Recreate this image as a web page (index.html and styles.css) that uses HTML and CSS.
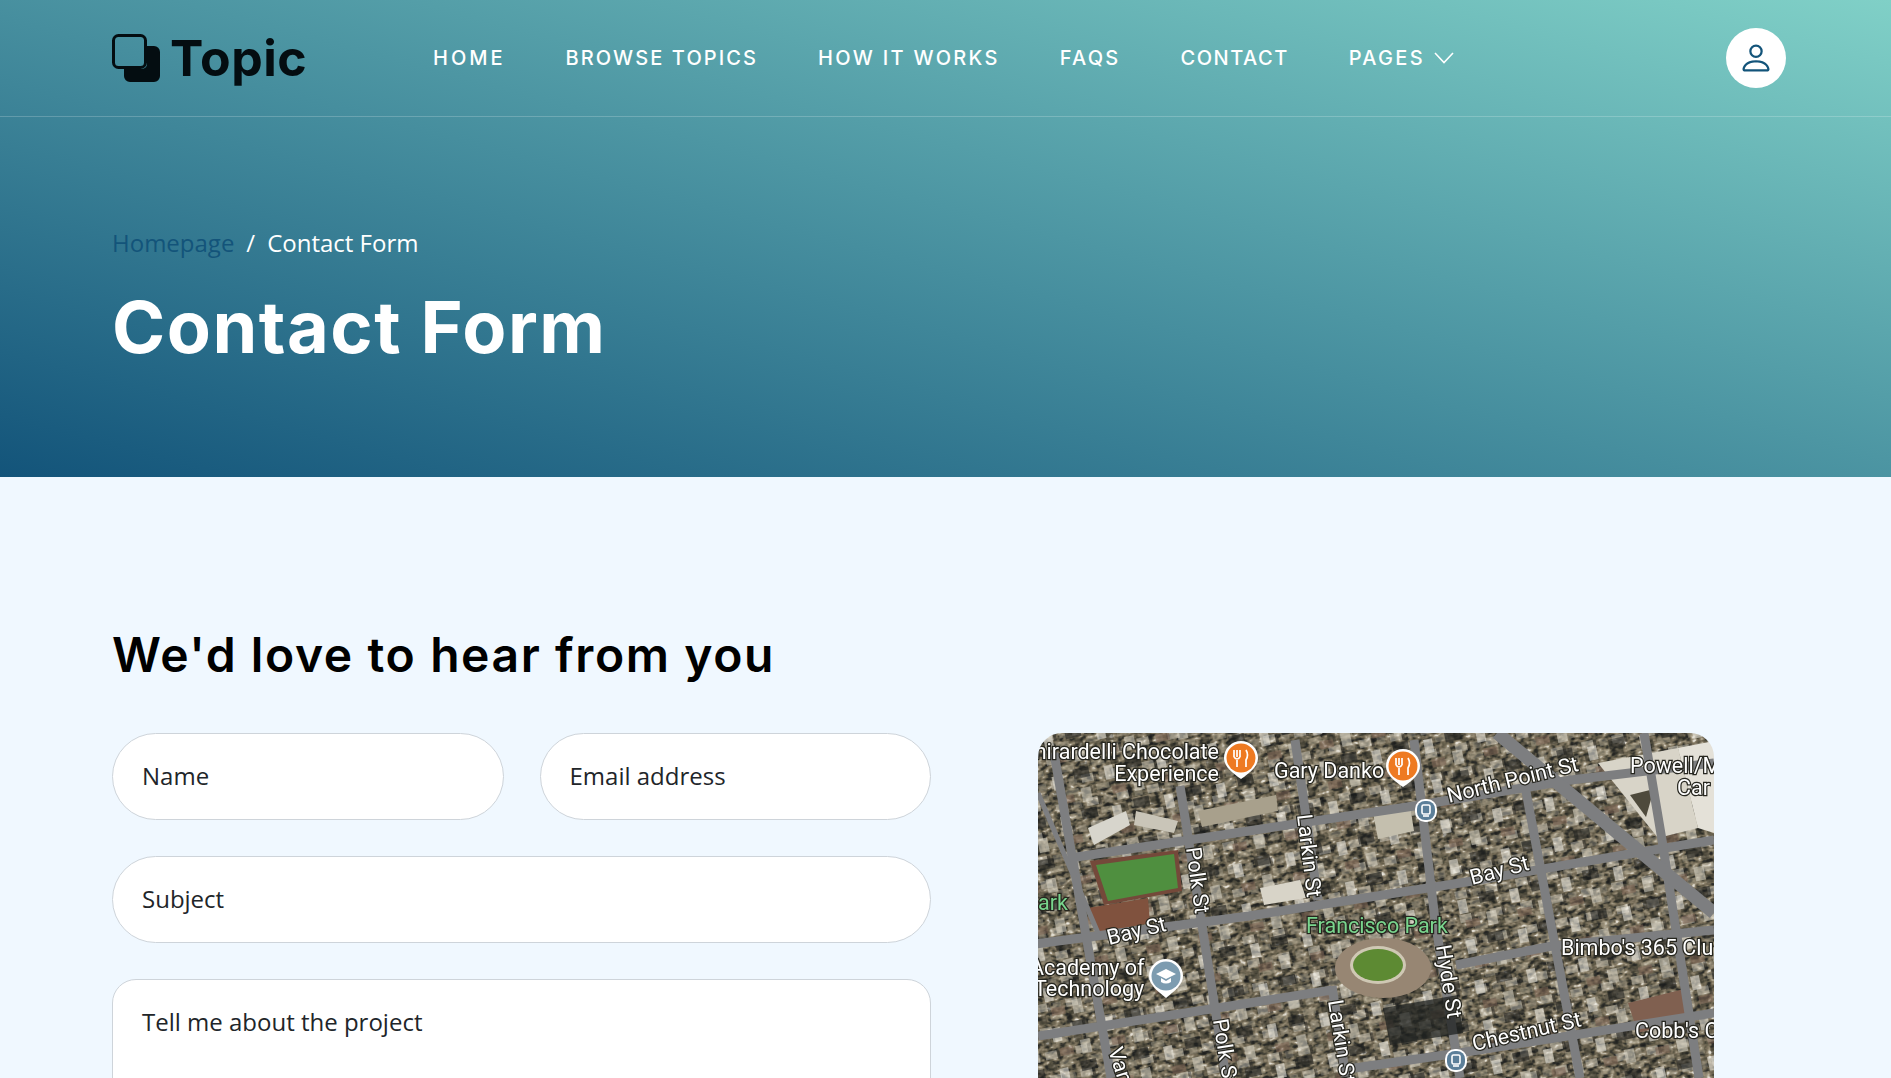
FILE: index.html
```html
<!DOCTYPE html>
<html lang="en">
<head>
  <meta charset="UTF-8">
  <title>Topic - Contact Form</title>
  <link rel="stylesheet" href="styles.css">
</head>
<body>

<!-- hero with navbar -->
<header class="hero">
  <div class="navbar">
    <a class="logo" href="#">
      <svg class="logo-icon" viewBox="0 0 48 48" width="48" height="48" fill="#040d11">
        <path d="M35 12h7a6 6 0 0 1 6 6v24a6 6 0 0 1-6 6H18a6 6 0 0 1-6-6v-7h18a5 5 0 0 0 5-5Z"/>
        <rect x="1.5" y="1.5" width="32" height="32" rx="5" fill="none" stroke="#040d11" stroke-width="3"/>
      </svg>
      <span>Topic</span>
    </a>
    <nav class="nav-links">
      <a href="#" class="loose">Home</a>
      <a href="#" class="tight">Browse Topics</a>
      <a href="#">How it works</a>
      <a href="#">FAQs</a>
      <a href="#" class="tighter">Contact</a>
      <a href="#" class="dropdown">Pages
        <svg viewBox="0 0 20 12" width="20" height="12"><polyline points="1,1 10,10.5 19,1" fill="none" stroke="#fff" stroke-width="1.6"/></svg>
      </a>
    </nav>
    <a class="user-btn" href="#">
      <svg viewBox="0 0 16 16" width="36" height="36" fill="#13547a"><path d="M8 8a3 3 0 1 0 0-6 3 3 0 0 0 0 6Zm2-3a2 2 0 1 1-4 0 2 2 0 0 1 4 0Zm4 8c0 1-1 1-1 1H3s-1 0-1-1 1-4 6-4 6 3 6 4Zm-1-.004c-.001-.246-.154-.986-.832-1.664C11.516 10.68 10.289 10 8 10c-2.29 0-3.516.68-4.168 1.332-.678.678-.83 1.418-.832 1.664h10Z"/></svg>
    </a>
  </div>
  <div class="hero-text">
    <div class="breadcrumb">
      <a href="#">Homepage</a>
      <span class="sep">/</span>
      <span>Contact Form</span>
    </div>
    <h1>Contact Form</h1>
  </div>
</header>

<!-- contact section -->
<section class="contact">
  <h2>We'd love to hear from you</h2>
  <div class="contact-row">
    <form class="contact-form">
      <div class="form-pair">
        <input type="text" placeholder="Name">
        <input type="email" placeholder="Email address">
      </div>
      <input type="text" placeholder="Subject">
      <textarea placeholder="Tell me about the project"></textarea>
    </form>

    <div class="map">
      <svg viewBox="0 0 676 345" width="676" height="345">
        <defs>
          <filter id="aerial" x="0" y="0" width="100%" height="100%" color-interpolation-filters="sRGB">
            <feTurbulence type="fractalNoise" baseFrequency="0.16 0.24" numOctaves="2" seed="11"/>
            <feColorMatrix values="1 0 0 0 0  1 0 0 0 0  1 0 0 0 0  0 0 0 0 1"/>
            <feComponentTransfer>
              <feFuncR type="table" tableValues="0.08 0.1 0.14 0.2 0.36 0.48 0.6 0.84 0.95 1"/>
              <feFuncG type="table" tableValues="0.08 0.1 0.14 0.2 0.34 0.44 0.56 0.82 0.93 1"/>
              <feFuncB type="table" tableValues="0.08 0.1 0.13 0.18 0.27 0.36 0.47 0.77 0.9 1"/>
            </feComponentTransfer>
          </filter>
          <pattern id="roofs" width="31" height="24" patternUnits="userSpaceOnUse" patternTransform="rotate(-12)">
            <rect x="2" y="2" width="12" height="8" fill="#e6e2d6"/>
            <rect x="14" y="2" width="3" height="9" fill="#16181a"/>
            <rect x="20" y="3" width="8" height="7" fill="#a09a8a"/>
            <rect x="3" y="14" width="8" height="8" fill="#24251f"/>
            <rect x="15" y="14" width="13" height="6" fill="#b8b09a"/>
          </pattern>
          <pattern id="roofs2" width="53" height="41" patternUnits="userSpaceOnUse" patternTransform="rotate(-12)">
            <rect x="4" y="5" width="9" height="14" fill="#f0eee6"/>
            <rect x="26" y="2" width="16" height="10" fill="#191b1b"/>
            <rect x="30" y="22" width="10" height="14" fill="#d8d4c6"/>
            <rect x="8" y="26" width="14" height="8" fill="#7d6454"/>
          </pattern>
        </defs>

        <rect width="676" height="345" fill="#6f6a5a"/>
        <rect x="-100" y="-100" width="900" height="600" transform="rotate(-12)" filter="url(#aerial)"/>
        <rect width="676" height="345" fill="url(#roofs)" opacity=".4"/>
        <rect width="676" height="345" fill="url(#roofs2)" opacity=".55"/>

        <!-- pale blocks -->
        <polygon points="560,30 640,15 660,95 620,105" fill="#d8d4c8"/>
        <polygon points="592,62 616,56 608,84" fill="#4e4a3c"/>
        <polygon points="640,15 676,8 676,100 660,95" fill="#e4e1d8"/>
        <polygon points="50,95 88,78 92,92 56,112" fill="#d7d5cc"/>
        <polygon points="98,78 140,88 136,100 96,92" fill="#c9c5b8"/>
        <polygon points="160,78 238,62 240,78 164,94" fill="#a8a08c"/>
        <polygon points="222,155 262,147 268,165 226,172" fill="#d8d4c8"/>
        <polygon points="335,80 372,72 376,98 340,106" fill="#c4bfae"/>
        <polygon points="50,175 110,165 112,190 60,200" fill="#80523e"/>
        <polygon points="590,270 650,255 655,285 600,300" fill="#806050"/>

        <!-- streets -->
        <g class="streets">
          <polyline points="32,125 376,73 533,47 676,30"/>
          <polyline points="-18,213 211,183 441,147 597,120 676,107"/>
          <polyline points="0,303 294,257"/>
          <polyline points="418,232 514,213 676,197"/>
          <polyline points="303,337 441,317 676,280"/>
          <polyline points="16,20 73,345"/>
          <polyline points="142,53 188,345"/>
          <polyline points="257,7 280,167"/>
          <polyline points="294,253 308,345"/>
          <polyline points="376,7 397,187 422,345"/>
          <polyline points="487,53 542,345"/>
          <polyline points="606,0 624,107 661,345"/>
          <polyline class="wide" points="459,0 676,180"/>
          <polyline class="thin" points="0,60 30,130 60,200"/>
        </g>

        <!-- field and park -->
        <polygon points="52,128 140,117 144,158 66,172" fill="#74493a"/>
        <polygon points="58,132 136,121 140,155 70,168" fill="#4f8f3f"/>
        <ellipse cx="345" cy="235" rx="48" ry="30" fill="#978673"/>
        <ellipse cx="340" cy="232" rx="28" ry="19" fill="#cfc8b4"/>
        <ellipse cx="340" cy="232" rx="25" ry="16" fill="#5d8a33"/>
        <polygon points="345,275 420,262 425,300 352,312" fill="#1f2220" opacity=".75"/>

        <!-- labels -->
        <g class="labels">
          <text x="181" y="26" text-anchor="end">hirardelli Chocolate</text>
          <text x="181" y="48" text-anchor="end">Experience</text>
          <text x="236" y="45">Gary Danko</text>
          <text x="592" y="40">Powell/M</text>
          <text x="639" y="62">Car</text>
          <text transform="translate(411 70) rotate(-14)">North Point St</text>
          <text transform="translate(434 152) rotate(-15)">Bay St</text>
          <text transform="translate(71 212) rotate(-14)">Bay St</text>
          <text transform="translate(259 82) rotate(83)">Larkin St</text>
          <text transform="translate(148 115) rotate(82)">Polk St</text>
          <text transform="translate(398 213) rotate(81)">Hyde St</text>
          <text transform="translate(290 268) rotate(81)">Larkin St</text>
          <text transform="translate(175 287) rotate(81)">Polk St</text>
          <text transform="translate(70 317) rotate(72)">Van</text>
          <text transform="translate(436 318) rotate(-13)">Chestnut St</text>
          <text x="523" y="222">Bimbo's 365 Clu</text>
          <text x="-8" y="242">Academy of</text>
          <text x="-4" y="263">Technology</text>
          <text x="597" y="305">Cobb's C</text>
          <text class="green" x="0" y="177">ark</text>
          <text class="green" x="268" y="200">Francisco Park</text>
        </g>

        <!-- pins -->
        <g transform="translate(203 25)">
          <path d="M0 21C-10 14-17 8-17 0a17 17 0 0 1 34 0C17 8 10 14 0 21Z" fill="#fff"/>
          <circle r="14.5" fill="#ee7a22"/>
          <path d="M-7-8v7M-4-8v7M-1-8v7M-7-1q3 4 6 0M-4 2v7M5-8q3 5 0 10v7" fill="none" stroke="#fff" stroke-width="1.7"/>
        </g>
        <g transform="translate(365 33)">
          <path d="M0 21C-10 14-17 8-17 0a17 17 0 0 1 34 0C17 8 10 14 0 21Z" fill="#fff"/>
          <circle r="14.5" fill="#ee7a22"/>
          <path d="M-7-8v7M-4-8v7M-1-8v7M-7-1q3 4 6 0M-4 2v7M5-8q3 5 0 10v7" fill="none" stroke="#fff" stroke-width="1.7"/>
        </g>
        <g transform="translate(128 243)">
          <path d="M0 22C-10 14-17 8-17 0a17 17 0 0 1 34 0C17 8 10 14 0 22Z" fill="#fff"/>
          <circle r="14.5" fill="#7d9cb0"/>
          <path d="M-10-2 0-7 10-2 0 3Z" fill="#fff"/>
          <path d="M-5 2v4q5 3 10 0v-4L0 5Z" fill="#fff"/>
        </g>
        <g transform="translate(388 77)">
          <rect x="-11" y="-11" width="22" height="23" rx="10" fill="#fff"/>
          <rect x="-9" y="-9" width="18" height="19" rx="8" fill="#5c7f99"/>
          <rect x="-4" y="-5" width="8" height="9" rx="1.5" fill="none" stroke="#fff" stroke-width="1.6"/>
          <path d="M-3 6h6" stroke="#fff" stroke-width="1.6"/>
        </g>
        <g transform="translate(418 327)">
          <rect x="-11" y="-11" width="22" height="23" rx="10" fill="#fff"/>
          <rect x="-9" y="-9" width="18" height="19" rx="8" fill="#5c7f99"/>
          <rect x="-4" y="-5" width="8" height="9" rx="1.5" fill="none" stroke="#fff" stroke-width="1.6"/>
          <path d="M-3 6h6" stroke="#fff" stroke-width="1.6"/>
        </g>
      </svg>
    </div>
  </div>
</section>

</body>
</html>
```

FILE: styles.css
```css
* {
  box-sizing: border-box;
}
html, body {
  height: 100%;
}
body {
  margin: 0;
  overflow: hidden;
  background-color: #f0f8ff;
  font-family: "Open Sans", sans-serif;
  color: #000;
}
a {
  text-decoration: none;
}

/* hero */
.hero {
  height: 477px;
  background-image: linear-gradient(15deg, #13547a 0%, #80d0c7 100%);
}
.navbar {
  display: flex;
  align-items: center;
  height: 117px;
  padding: 0 105px 0 112px;
  border-bottom: 1px solid rgba(255, 255, 255, 0.2);
}
.logo {
  display: flex;
  align-items: center;
  gap: 10px;
  width: 321px;
  color: #040d11;
  font-family: Inter, sans-serif;
  font-size: 50px;
  font-weight: 700;
  letter-spacing: 0.5px;
  line-height: 1;
}
.logo-icon {
  margin-top: -1px;
}
.nav-links {
  display: flex;
  align-items: center;
  gap: 60px;
  flex: 1;
}
.nav-links a {
  color: #fff;
  font-family: Inter, sans-serif;
  font-size: 20px;
  font-weight: 500;
  letter-spacing: 2.3px;
  text-transform: uppercase;
  white-space: nowrap;
}
.nav-links .loose {
  letter-spacing: 3px;
}
.nav-links .tight {
  letter-spacing: 2.1px;
}
.nav-links .tighter {
  letter-spacing: 1.5px;
}
.dropdown {
  display: flex;
  align-items: center;
  gap: 9px;
}
.user-btn {
  display: flex;
  align-items: center;
  justify-content: center;
  width: 60px;
  height: 60px;
  border-radius: 50%;
  background: #fff;
}
.hero-text {
  padding: 108px 112px 0;
}
.breadcrumb {
  display: flex;
  gap: 12px;
  font-size: 24px;
  line-height: 36px;
  color: #fff;
}
.breadcrumb a {
  color: #13547a;
}
h1 {
  margin: 24px 0 0;
  color: #fff;
  font-family: Inter, sans-serif;
  font-size: 72px;
  font-weight: 700;
  letter-spacing: 1.5px;
  line-height: 84px;
}

/* contact */
.contact {
  padding: 149px 112px 0;
}
h2 {
  margin: 0 0 49px;
  font-family: Inter, sans-serif;
  font-size: 48px;
  font-weight: 600;
  letter-spacing: 1.6px;
  line-height: 58px;
}
.contact-row {
  display: flex;
  gap: 107px;
}
.contact-form {
  display: flex;
  flex-direction: column;
  gap: 36px;
  width: 819px;
}
.form-pair {
  display: flex;
  gap: 36px;
}
.form-pair input {
  flex: 1;
  min-width: 0;
}
input, textarea {
  display: block;
  width: 100%;
  padding: 0 29px;
  border: 1px solid #ced4da;
  background: #fff;
  font-family: "Open Sans", sans-serif;
  font-size: 24px;
  color: #212529;
  outline: none;
}
input {
  height: 87px;
  padding-bottom: 2px;
  border-radius: 44px;
}
textarea {
  height: 240px;
  padding-top: 24px;
  border-radius: 24px;
  line-height: 36px;
  resize: none;
}
input::placeholder, textarea::placeholder {
  color: #212529;
  opacity: 1;
}

/* map */
.map {
  width: 676px;
  height: 345px;
  border-radius: 24px 24px 0 0;
  overflow: hidden;
}
.map svg {
  display: block;
  filter: blur(0.5px);
}
.streets polyline {
  fill: none;
  stroke: #7d7e80;
  stroke-width: 9;
}
.streets .wide {
  stroke-width: 13;
}
.streets .thin {
  stroke-width: 5;
}
.labels text {
  fill: #fff;
  stroke: #26261f;
  stroke-width: 2.5px;
  paint-order: stroke;
  font-family: Roboto, sans-serif;
  font-size: 21.5px;
}
.labels .green {
  fill: #79d58d;
}
```
